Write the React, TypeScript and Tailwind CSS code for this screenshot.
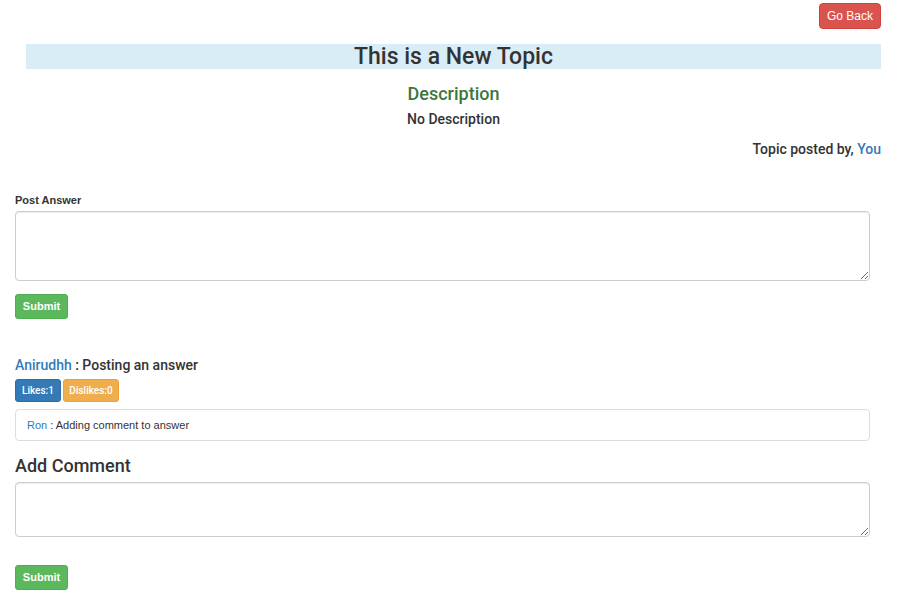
const App = () => {
  return (
    <div className="min-h-[602px] bg-white text-[#333] font-['Liberation_Sans',Arial,sans-serif]">
      <div className="px-[26px] pt-[3px] pr-[28px]">
        <div className="flex justify-end">
          <button className="h-[26px] px-[7px] rounded-[4px] bg-[#d9534f] border border-[#d43f3a] text-white text-[12px]">
            Go Back
          </button>
        </div>
        <h2 className="mt-[15px] bg-[#d9edf7] text-center text-[23px] leading-[25px] font-medium font-['Roboto',sans-serif] text-[#333]">
          This is a New Topic
        </h2>
        <h4 className="mt-[14px] text-center text-[18px] leading-[22px] font-medium font-['Roboto',sans-serif] text-[#3c763d]">
          Description
        </h4>
        <h5 className="mt-[5px] text-center text-[14px] leading-[18px] font-medium font-['Roboto',sans-serif]">No Description</h5>
        <h5 className="mt-[12px] text-right text-[14px] leading-[18px] font-medium font-['Roboto',sans-serif]">
          Topic posted by, <span className="text-[#337ab7]">You</span>
        </h5>
      </div>

      <div className="px-[15px] pr-[39px]">
        <label className="block mt-[36px] text-[11px] leading-[13px] font-bold">Post Answer</label>
        <textarea className="block mt-[4px] w-full h-[70px] rounded-[4px] border border-[#ccc] shadow-[inset_0_1px_1px_rgba(0,0,0,0.075)]" />
        <button className="mt-[13px] h-[25px] w-[53px] rounded-[3px] bg-[#5cb85c] border border-[#4cae4c] text-white text-[11px] font-bold">
          Submit
        </button>

        <h5 className="mt-[37px] text-[14px] leading-[18px] font-medium font-['Roboto',sans-serif]">
          <span className="text-[#337ab7]">Anirudhh</span> : Posting an answer
        </h5>
        <div className="mt-[5px] flex gap-[2px]">
          <button className="h-[23px] w-[46px] rounded-[3px] bg-[#337ab7] border border-[#2e6da4] text-white text-[10px] font-medium font-['Roboto',sans-serif]">
            Likes:1
          </button>
          <button className="h-[23px] w-[56px] rounded-[3px] bg-[#f0ad4e] border border-[#eea236] text-white text-[10px] font-medium font-['Roboto',sans-serif]">
            Dislikes:0
          </button>
        </div>
        <div className="mt-[7px] h-[32px] flex items-center px-[11px] rounded-[4px] border border-[#ddd] text-[11px]">
          <span className="text-[#337ab7]">Ron</span>&nbsp;: Adding comment to answer
        </div>

        <h3 className="mt-[14px] text-[18px] leading-[22px] font-medium font-['Roboto',sans-serif]">Add Comment</h3>
        <textarea className="block mt-[5px] w-full h-[55px] rounded-[4px] border border-[#ccc] shadow-[inset_0_1px_1px_rgba(0,0,0,0.075)]" />
        <button className="mt-[28px] h-[25px] w-[53px] rounded-[3px] bg-[#5cb85c] border border-[#4cae4c] text-white text-[11px] font-bold">
          Submit
        </button>
      </div>
    </div>
  );
};

export default App;
